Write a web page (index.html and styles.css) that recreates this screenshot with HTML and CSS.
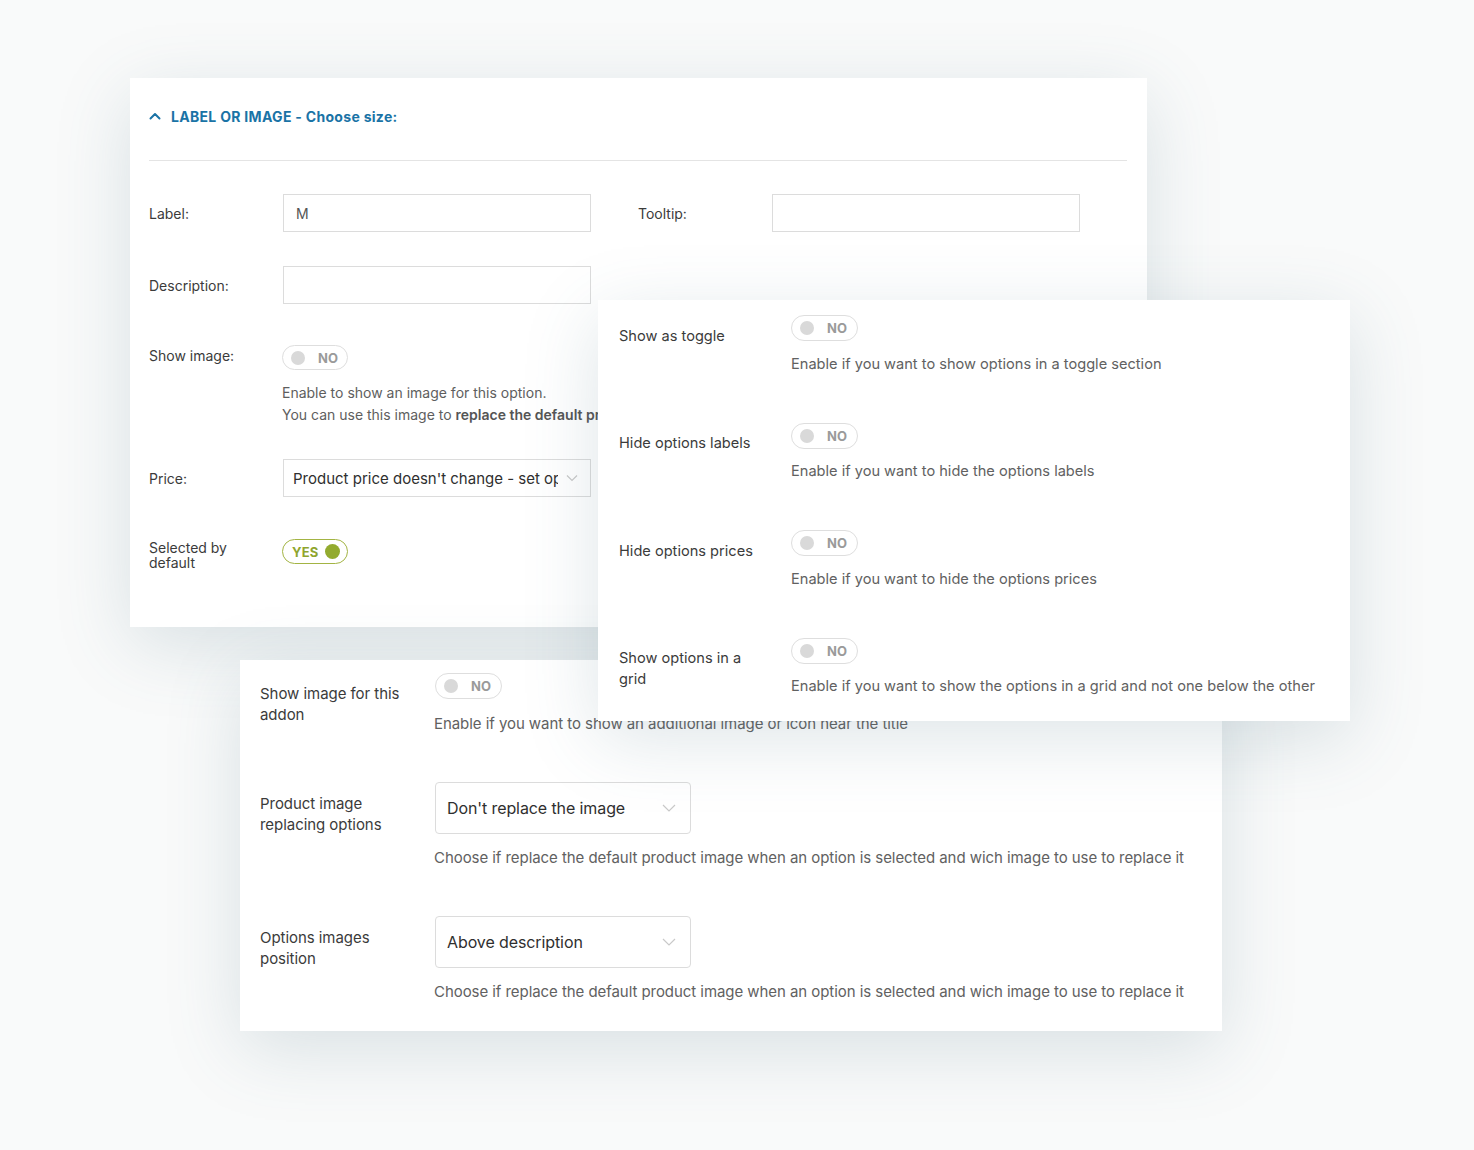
FILE: index.html
```html
<!DOCTYPE html>
<html lang="en">
<head>
<meta charset="utf-8">
<title>Options</title>
<link rel="stylesheet" href="styles.css">
</head>
<body>
<div class="canvas">

  <section class="card card-main">
    <header class="card-head">
      <svg class="head-chevron" width="12" height="8" viewBox="0 0 12 8"><path d="M1.5 6.5 L6 2 L10.5 6.5" fill="none" stroke="#1a73a6" stroke-width="2" stroke-linecap="round" stroke-linejoin="round"/></svg>
      <span class="head-title">LABEL OR IMAGE - Choose size:</span>
    </header>
    <div class="main-body">
      <div class="mrow mrow-first">
        <div class="mlabel">Label:</div>
        <div class="minput"><span>M</span></div>
        <div class="mlabel mlabel-tip">Tooltip:</div>
        <div class="minput"></div>
      </div>
      <div class="mrow mrow-desc">
        <div class="mlabel">Description:</div>
        <div class="minput"></div>
      </div>
      <div class="mrow mrow-top mrow-image">
        <div class="mlabel mlabel-top">Show image:</div>
        <div class="mfield">
          <div class="toggle toggle-sm"><span class="knob"></span><span class="tword">NO</span></div>
          <p class="mhelp">Enable to show an image for this option.<br>You can use this image to <b>replace the default product image</b></p>
        </div>
      </div>
      <div class="mrow mrow-price">
        <div class="mlabel">Price:</div>
        <div class="minput mselect"><span class="seltext">Product price doesn't change - set option as free</span>
          <svg class="selchev" width="12" height="8" viewBox="0 0 12 8"><path d="M1 1.5 L6 6.5 L11 1.5" fill="none" stroke="#c9c9c9" stroke-width="1.2"/></svg>
        </div>
      </div>
      <div class="mrow mrow-top mrow-default">
        <div class="mlabel mlabel-tight">Selected by<br>default</div>
        <div class="toggle toggle-sm toggle-on"><span class="tword">YES</span><span class="knob"></span></div>
      </div>
    </div>
  </section>

  <section class="card card-bottom">
    <div class="orow">
      <div class="olabel">Show image for this<br>addon</div>
      <div class="ofield">
        <div class="toggle"><span class="knob"></span><span class="tword">NO</span></div>
        <p class="ohelp">Enable if you want to show an additional image or icon near the title</p>
      </div>
    </div>
    <div class="orow">
      <div class="olabel">Product image<br>replacing options</div>
      <div class="ofield">
        <div class="bselect"><span>Don't replace the image</span>
          <svg class="selchev" width="14" height="8" viewBox="0 0 14 8"><path d="M1 1 L7 7 L13 1" fill="none" stroke="#c9c9c9" stroke-width="1.2"/></svg>
        </div>
        <p class="ohelp">Choose if replace the default product image when an option is selected and wich image to use to replace it</p>
      </div>
    </div>
    <div class="orow">
      <div class="olabel">Options images<br>position</div>
      <div class="ofield">
        <div class="bselect"><span>Above description</span>
          <svg class="selchev" width="14" height="8" viewBox="0 0 14 8"><path d="M1 1 L7 7 L13 1" fill="none" stroke="#c9c9c9" stroke-width="1.2"/></svg>
        </div>
        <p class="ohelp">Choose if replace the default product image when an option is selected and wich image to use to replace it</p>
      </div>
    </div>
  </section>

  <section class="card card-right">
    <div class="orow">
      <div class="olabel">Show as toggle</div>
      <div class="ofield">
        <div class="toggle"><span class="knob"></span><span class="tword">NO</span></div>
        <p class="ohelp">Enable if you want to show options in a toggle section</p>
      </div>
    </div>
    <div class="orow">
      <div class="olabel">Hide options labels</div>
      <div class="ofield">
        <div class="toggle"><span class="knob"></span><span class="tword">NO</span></div>
        <p class="ohelp">Enable if you want to hide the options labels</p>
      </div>
    </div>
    <div class="orow">
      <div class="olabel">Hide options prices</div>
      <div class="ofield">
        <div class="toggle"><span class="knob"></span><span class="tword">NO</span></div>
        <p class="ohelp">Enable if you want to hide the options prices</p>
      </div>
    </div>
    <div class="orow">
      <div class="olabel">Show options in a<br>grid</div>
      <div class="ofield">
        <div class="toggle"><span class="knob"></span><span class="tword">NO</span></div>
        <p class="ohelp">Enable if you want to show the options in a grid and not one below the other</p>
      </div>
    </div>
  </section>

</div>
</body>
</html>
```

FILE: styles.css
```css
* { box-sizing: border-box; }
html, body { margin: 0; padding: 0; }
body {
  background: #f9fafa;
  font-family: Inter, "Open Sans", "Liberation Sans", sans-serif;
  color: #3b3b3b;
}
.canvas {
  position: relative;
  width: 1474px;
  height: 1150px;
  overflow: hidden;
}
.card {
  position: absolute;
  background: #fff;
  box-shadow: 0 18px 70px rgba(70, 110, 130, 0.18);
}
p { margin: 0; }

/* main card */
.card-main {
  left: 130px; top: 78px; width: 1017px; height: 549px;
  padding: 0 20px 0 19px;
}
.card-head {
  height: 83px;
  border-bottom: 1px solid #e4e4e4;
  display: flex;
  align-items: center;
  gap: 10px;
  padding-bottom: 5px;
}
.head-chevron { margin-top: -1px; }
.head-title {
  color: #1a73a6;
  font-weight: 700;
  font-size: 14px;
  letter-spacing: 0.3px;
}
.main-body { display: flex; flex-direction: column; }
.mrow { display: flex; align-items: center; }
.mrow-top { align-items: flex-start; }
.mrow-first { margin-top: 33px; }
.mrow-desc { margin-top: 34px; }
.mrow-image { margin-top: 41px; }
.mrow-price { margin-top: 33px; }
.mrow-default { margin-top: 42px; }
.mlabel {
  width: 134px;
  font-size: 14px;
  color: #3b3b3b;
}
.mlabel-tip { margin-left: 47px; }
.mlabel-top { padding-top: 1px; line-height: 20px; }
.mlabel-tight { line-height: 14.5px; padding-top: 2px; width: 133px; }
.minput {
  width: 308px;
  height: 38px;
  border: 1px solid #dcdcdc;
  display: flex;
  align-items: center;
  padding-left: 12px;
  font-size: 14px;
  color: #555;
}
.mselect {
  padding-left: 9px;
  padding-right: 12px;
  position: relative;
}
.seltext {
  font-size: 15px;
  color: #2f2f2f;
  white-space: nowrap;
  overflow: hidden;
  width: 265px;
}
.selchev { margin-left: auto; flex: none; }
.mfield { display: flex; flex-direction: column; width: 320px; margin-left: -1px; }
.mhelp {
  margin-top: 12px;
  font-size: 14px;
  line-height: 22px;
  color: #5e5e5e;
  white-space: nowrap;
  overflow: hidden;
  width: 317px;
}
.mhelp b { font-weight: 600; color: #555; }

/* toggles */
.toggle {
  width: 67px;
  height: 26px;
  border: 1px solid #dedede;
  border-radius: 13px;
  display: flex;
  align-items: center;
  padding-left: 8px;
  gap: 13px;
  background: #fff;
}
.toggle-sm { width: 66px; height: 25px; }
.knob {
  width: 14px; height: 14px;
  border-radius: 50%;
  background: #d9d9d9;
  flex: none;
}
.tword {
  font-size: 13px;
  font-weight: 700;
  color: #9a9a9a;
  letter-spacing: 0.2px;
}
.toggle-on {
  border-color: #a3b443;
  padding-left: 9px;
  gap: 6px;
}
.toggle-on .tword { color: #8fa52e; }
.toggle-on .knob { background: #93ab2f; width: 15px; height: 15px; }

/* option cards */
.card-right {
  left: 598px; top: 300px; width: 752px; height: 421px;
  padding: 15px 0 0 21px;
  display: flex; flex-direction: column; gap: 48px;
}
.card-bottom {
  left: 240px; top: 660px; width: 982px; height: 371px;
  padding: 13px 0 0 20px;
  display: flex; flex-direction: column; gap: 48px;
}
.orow { display: flex; align-items: flex-start; }
.olabel {
  flex: none;
  width: 172px;
  padding-top: 10px;
  font-size: 15px;
  line-height: 21px;
  color: #3b3b3b;
}
.card-right .olabel { font-size: 14.6px; padding-top: 10.5px; }
.card-bottom .olabel { width: 174px; padding-top: 10px; letter-spacing: -0.05px; }
.card-bottom .orow:not(:first-child) .olabel { padding-top: 11px; }
.ofield { display: flex; flex-direction: column; align-items: flex-start; }
.ohelp {
  margin-top: 12px;
  font-size: 15px;
  line-height: 21px;
  color: #616161;
  white-space: nowrap;
}
.card-right .ohelp { font-size: 14.6px; margin-top: 12.5px; }
.card-bottom .ohelp { margin-top: 14px; letter-spacing: -0.06px; }
.card-bottom .orow:not(:first-child) .ohelp { margin-top: 13px; }
.card-bottom .toggle { margin-left: 1px; }
.bselect {
  width: 256px;
  height: 52px;
  border: 1px solid #dcdcdc;
  border-radius: 4px;
  display: flex;
  align-items: center;
  padding: 0 14px 0 11px;
  font-size: 16px;
  color: #2f2f2f;
  margin-left: 1px;
}
.bselect span { letter-spacing: -0.1px; }
```
